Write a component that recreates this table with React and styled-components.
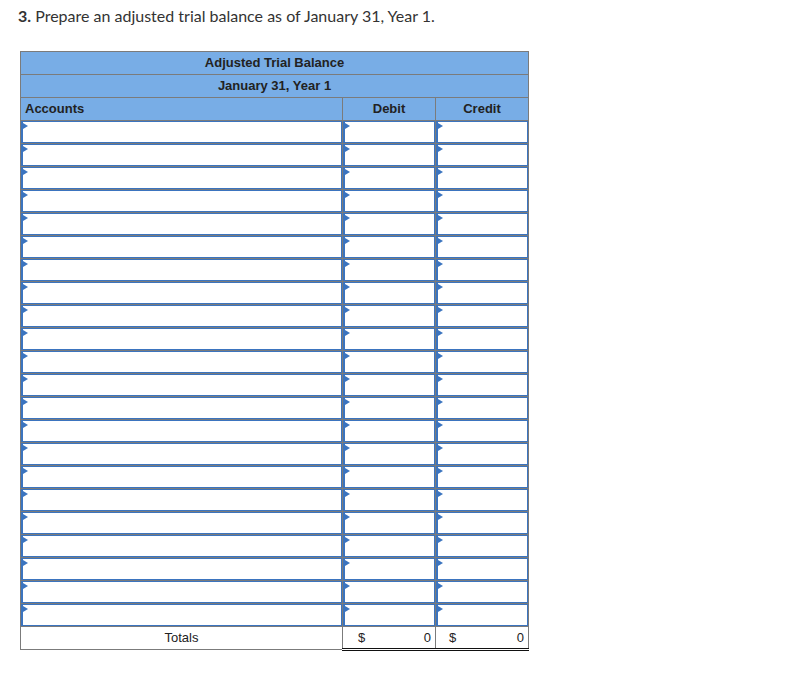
import React from 'react';
import styled, { createGlobalStyle } from 'styled-components';

const GlobalStyle = createGlobalStyle`
  body {
    margin: 0;
    background: #fff;
  }
`;

const Page = styled.div`
  padding: 5px 18px 20px;
`;

const Title = styled.p`
  margin: 0 0 24px;
  font-family: 'Lato', 'Liberation Sans', sans-serif;
  font-size: 16px;
  line-height: 22px;
  color: #333;

  b {
    font-weight: 700;
  }
`;

const Table = styled.table`
  margin-left: 2px;
  width: 509px;
  border-collapse: collapse;
  table-layout: fixed;
  border: 1px solid #7b7b7b;
  font-family: 'Liberation Sans', Arial, sans-serif;
  font-size: 13px;
  color: #222;
`;

const HeadCell = styled.th`
  height: 22px;
  padding: 0 4px;
  background: #78ade6;
  border: 1px solid #7b7b7b;
  font-weight: 700;
  text-align: ${(p) => p.align || 'center'};
  line-height: 22px;
`;

const Cell = styled.td`
  height: 22px;
  padding: 0;
  border: 1px solid #7b7b7b;
  position: relative;
`;

const Field = styled.input`
  display: block;
  width: 100%;
  height: 22px;
  box-sizing: border-box;
  margin: 0;
  border: 1px solid #3b74bf;
  border-left-width: 2px;
  background: #fff;
  outline: none;
`;

const Flag = styled.span`
  position: absolute;
  top: 2px;
  left: 2px;
  width: 0;
  height: 0;
  border-top: 3px solid transparent;
  border-bottom: 3px solid transparent;
  border-left: 5px solid #3b74bf;
`;

const TotalLabel = styled.td`
  height: 22px;
  padding: 0;
  border: 1px solid #7b7b7b;
  text-align: center;
  line-height: 22px;
`;

const TotalCell = styled.td`
  height: 21px;
  padding: 0;
  border: 1px solid #7b7b7b;
  border-bottom: 3px double #111;
`;

const Amount = styled.div`
  display: flex;
  justify-content: space-between;
  padding: 0 4px 0 ${(p) => p.indent}px;
  line-height: 21px;
`;

const InputCell = () => (
  <Cell>
    <Field type="text" />
    <Flag />
  </Cell>
);

const rows = Array.from({ length: 22 }, (_, i) => i);

const App = () => {
  return (
    <Page>
      <GlobalStyle />
      <Title>
        <b>3.</b> Prepare an adjusted trial balance as of January 31, Year 1.
      </Title>
      <Table>
        <colgroup>
          <col style={{ width: '322px' }} />
          <col style={{ width: '93px' }} />
          <col style={{ width: '93px' }} />
        </colgroup>
        <thead>
          <tr>
            <HeadCell colSpan={3}>Adjusted Trial Balance</HeadCell>
          </tr>
          <tr>
            <HeadCell colSpan={3}>January 31, Year 1</HeadCell>
          </tr>
          <tr>
            <HeadCell align="left">Accounts</HeadCell>
            <HeadCell>Debit</HeadCell>
            <HeadCell>Credit</HeadCell>
          </tr>
        </thead>
        <tbody>
          {rows.map((r) => (
            <tr key={r}>
              <InputCell />
              <InputCell />
              <InputCell />
            </tr>
          ))}
          <tr>
            <TotalLabel>Totals</TotalLabel>
            <TotalCell>
              <Amount indent={15}>
                <span>$</span>
                <span>0</span>
              </Amount>
            </TotalCell>
            <TotalCell>
              <Amount indent={13}>
                <span>$</span>
                <span>0</span>
              </Amount>
            </TotalCell>
          </tr>
        </tbody>
      </Table>
    </Page>
  );
};

export default App;
